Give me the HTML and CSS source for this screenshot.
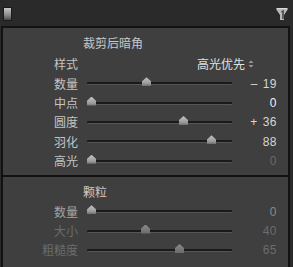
FILE: index.html
```html
<!DOCTYPE html>
<html lang="zh-CN">
<head>
    <meta charset="UTF-8">
    <title>效果</title>
    <link rel="stylesheet" href="styles.css">
</head>
<body>
    <div class="topbar">
        <div class="toggle"></div>
        <svg class="panel-switch" width="12" height="13" viewBox="0 0 12 13">
            <polygon points="0,1 12,1 8,7 8,12 4,12 4,7" fill="#b8b8b8"/>
            <polygon points="1,0 11,0 12,1 0,1" fill="#dcdcdc"/>
            <path d="M5.5 4 L7 3 L7 11" stroke="#3a3a3a" stroke-width="1.4" fill="none"/>
        </svg>
    </div>

    <div class="panel">
        <!-- 裁剪后暗角 -->
        <div class="section">
            <div class="section-title">裁剪后暗角</div>
            <div class="style-row">
                <span class="label">样式</span>
                <span class="dropdown">高光优先
                    <svg width="6" height="8" viewBox="0 0 6 8">
                        <path d="M0.5 3 L3 0.5 L5.5 3 Z M0.5 5 L3 7.5 L5.5 5 Z" fill="#9a9a9a"/>
                    </svg>
                </span>
            </div>
            <div class="slider-row">
                <span class="label">数量</span>
                <div class="track"><span class="thumb" style="left: 55px"></span></div>
                <span class="value">– 19</span>
            </div>
            <div class="slider-row">
                <span class="label">中点</span>
                <div class="track"><span class="thumb" style="left: 0px"></span></div>
                <span class="value bright">0</span>
            </div>
            <div class="slider-row">
                <span class="label">圆度</span>
                <div class="track"><span class="thumb" style="left: 92px"></span></div>
                <span class="value">+ 36</span>
            </div>
            <div class="slider-row">
                <span class="label">羽化</span>
                <div class="track"><span class="thumb" style="left: 120px"></span></div>
                <span class="value">88</span>
            </div>
            <div class="slider-row">
                <span class="label">高光</span>
                <div class="track"><span class="thumb" style="left: 0px"></span></div>
                <span class="value dim">0</span>
            </div>
        </div>

        <!-- 颗粒 -->
        <div class="section grain">
            <div class="section-title">颗粒</div>
            <div class="slider-row">
                <span class="label">数量</span>
                <div class="track"><span class="thumb" style="left: 0px"></span></div>
                <span class="value">0</span>
            </div>
            <div class="slider-row disabled">
                <span class="label">大小</span>
                <div class="track"><span class="thumb" style="left: 54px"></span></div>
                <span class="value">40</span>
            </div>
            <div class="slider-row disabled">
                <span class="label">粗糙度</span>
                <div class="track"><span class="thumb" style="left: 88px"></span></div>
                <span class="value">65</span>
            </div>
        </div>
    </div>
</body>
</html>
```

FILE: styles.css
```css
body {
    margin: 0;
    padding: 0;
    width: 293px;
    height: 267px;
    overflow: hidden;
    background-color: #2a2a2a;
    font-family: "Noto Sans CJK SC", "Liberation Sans", sans-serif;
    font-size: 12px;
    color: #c4c4c4;
}
.topbar {
    height: 26px;
    display: flex;
    justify-content: space-between;
    align-items: flex-start;
    padding: 7px 5px 0 3px;
    box-sizing: border-box;
}
.toggle {
    width: 7px;
    height: 12px;
    border: 1px solid #1a1a1a;
    background: linear-gradient(#c8c8c8, #8a8a8a 60%, #4a4a4a);
}
.panel-switch {
    margin-top: 1px;
}
.panel {
    margin-left: 1px;
    width: 289px;
    height: 241px;
    overflow: hidden;
    background-color: #3f3f3f;
    border: 2px solid #121212;
    border-bottom: none;
    box-sizing: border-box;
}
.section {
    padding: 5px 0 4px;
}
.grain {
    border-top: 2px solid #121212;
    padding-top: 5px;
}
.section-title {
    height: 20px;
    line-height: 20px;
    padding-left: 80px;
    color: #c8c8c8;
}
.style-row {
    height: 21px;
    display: flex;
    align-items: center;
}
.label {
    width: 75px;
    text-align: right;
    flex-shrink: 0;
}
.dropdown {
    margin-left: auto;
    margin-right: 34px;
    display: flex;
    align-items: center;
    gap: 3px;
    color: #e0e0e0;
}
.slider-row {
    height: 19.4px;
    display: grid;
    grid-template-columns: 75px 145px 36px;
    column-gap: 9px;
    align-items: center;
    line-height: 1;
}
.slider-row .label {
    width: auto;
}
.track {
    position: relative;
    height: 2px;
    background-color: #1a1a1a;
    border-bottom: 1px solid #555555;
    border-radius: 1px;
}
.thumb {
    position: absolute;
    top: -5px;
    width: 9px;
    height: 9px;
    background: linear-gradient(#c4c4c4, #9a9a9a 70%, #6e6e6e);
    clip-path: polygon(50% 0, 100% 45%, 100% 100%, 0 100%, 0 45%);
}
.value {
    text-align: right;
    font-family: "Liberation Sans", sans-serif;
    font-size: 12px;
    letter-spacing: 0.5px;
    word-spacing: 1px;
    color: #d6d6d6;
}
.value.bright {
    color: #f0f0f0;
}
.value.dim {
    color: #6a6a6a;
}
.grain .label {
    color: #a4a4a4;
}
.grain .value {
    color: #8a8a8a;
}
.grain .disabled .label {
    color: #6c6c6c;
}
.grain .disabled .value {
    color: #6c6c6c;
}
.grain .disabled .thumb {
    background: linear-gradient(#8a8a8a, #6a6a6a);
}
```
